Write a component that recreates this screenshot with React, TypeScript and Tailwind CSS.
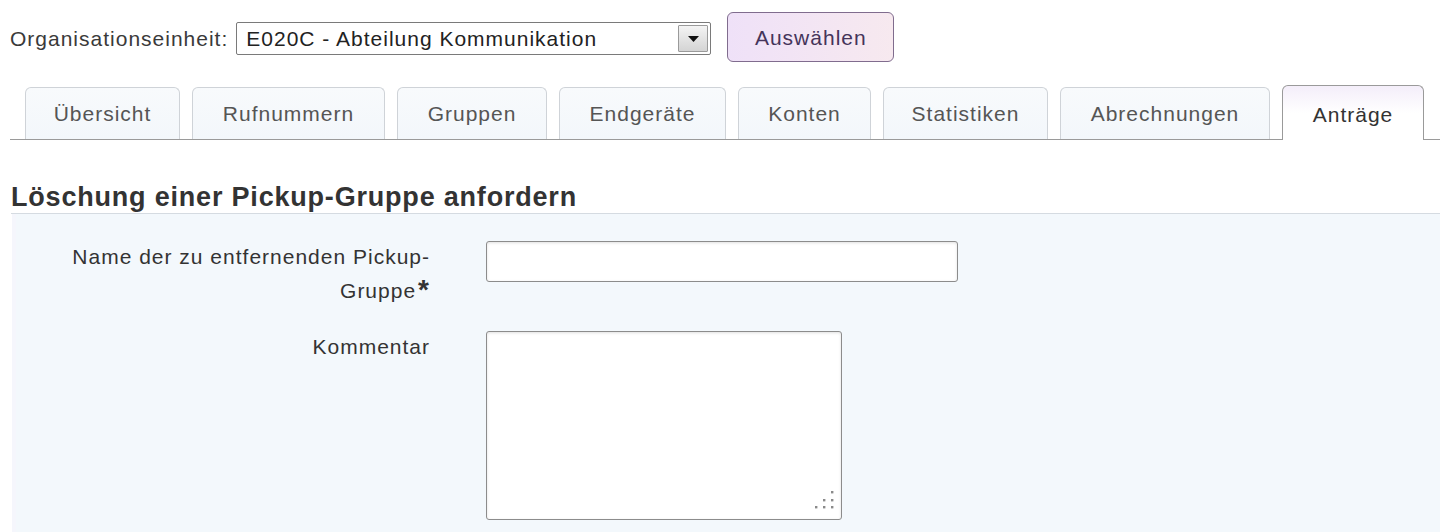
import React from "react";

const tabs: { label: string; w: string; active?: boolean }[] = [
  { label: "Übersicht", w: "w-[155px]" },
  { label: "Rufnummern", w: "w-[193px]" },
  { label: "Gruppen", w: "w-[150px]" },
  { label: "Endgeräte", w: "w-[167px]" },
  { label: "Konten", w: "w-[133px]" },
  { label: "Statistiken", w: "w-[165px]" },
  { label: "Abrechnungen", w: "w-[210px]" },
  { label: "Anträge", w: "w-[142px]", active: true },
];

export default function App() {
  return (
    <div className="w-[1440px] h-[532px] overflow-hidden bg-white font-['Liberation_Sans',Arial,sans-serif] text-[21px] tracking-[1px] text-[#333]">
      {/* Top row */}
      <div className="flex items-center pt-[12px] pl-[10px] h-[62px]">
        <span className="text-[#3a3a3a] leading-none mt-[3px]">Organisationseinheit:</span>
        <div className="ml-[8px] mt-[3px] flex items-center w-[475px] h-[33px] border border-[#7a7a7a] rounded-[2px] bg-white pl-[9px] pr-[2px]">
          <span className="flex-1 leading-none text-[#222]">E020C - Abteilung Kommunikation</span>
          <div className="w-[30px] h-[27px] border border-[#9a9a9a] rounded-[1px] bg-gradient-to-b from-[#f4f4f4] to-[#d4d4d4] flex items-center justify-center">
            <svg width="11" height="6" viewBox="0 0 11 6">
              <path d="M0 0 H11 L5.5 6 Z" fill="#111" />
            </svg>
          </div>
        </div>
        <button className="ml-[16px] w-[167px] h-[50px] rounded-[6px] border border-[#806c8e] bg-gradient-to-r from-[#efe1f8] to-[#f7e9ef] text-[#45345a] leading-none">
          Auswählen
        </button>
      </div>

      {/* Tabs */}
      <div className="mt-[26px] ml-[10px] pl-[15px] flex items-end gap-[12px] h-[52px] border-b border-[#9a9a9a]">
        {tabs.map((t) =>
          t.active ? (
            <div
              key={t.label}
              className={`${t.w} h-[55px] -mb-px flex items-center justify-center rounded-t-[6px] border border-b-0 border-[#9a9a9a] bg-gradient-to-b from-[#f4eefa] to-white to-50% text-[#333] pt-[3px]`}
            >
              {t.label}
            </div>
          ) : (
            <div
              key={t.label}
              className={`${t.w} h-[52px] flex items-center justify-center rounded-t-[6px] border border-b-0 border-[#cfd3d8] bg-gradient-to-b from-[#f8fafc] to-[#f3f7fb] text-[#555]`}
            >
              {t.label}
            </div>
          )
        )}
      </div>

      {/* Section */}
      <div className="ml-[12px]">
        <h2 className="pt-[40px] h-[74px] leading-[34px] font-bold text-[27px] tracking-[0.8px] text-[#333] border-b border-[#d5dbe1] -ml-[1px]">
          Löschung einer Pickup-Gruppe anfordern
        </h2>
        <div className="h-[400px] bg-[#f3f8fc] border-l-4 border-[#f5f6fc] pt-[26px] flex flex-col gap-[22px]">
          <div className="flex items-start">
            <div className="w-[414px] text-right leading-[34px] text-[#333]">
              Name der zu entfernenden Pickup-
              <br />
              Gruppe
              <span className="inline-block ml-[2px] text-[28px] font-bold leading-none align-top mt-[2px] text-[#333]">*</span>
            </div>
            <input
              type="text"
              className="ml-[56px] mt-[1px] w-[472px] h-[41px] bg-white border border-[#8c8c8c] rounded-[3px] shadow-[inset_0_1px_3px_rgba(0,0,0,0.12)] outline-none"
            />
          </div>
          <div className="flex items-start">
            <div className="w-[414px] text-right leading-[34px] text-[#333]">Kommentar</div>
            <div className="relative ml-[56px] mt-[1px]">
              <textarea className="block w-[356px] h-[189px] bg-white border border-[#8c8c8c] rounded-[3px] shadow-[inset_0_1px_3px_rgba(0,0,0,0.12)] resize-none outline-none" />
              <svg className="absolute right-[7px] bottom-[11px]" width="20" height="20" viewBox="0 0 20 20">
                <rect x="16" y="2" width="2.4" height="2.4" fill="#8a8a8a" />
                <rect x="8" y="10" width="2.4" height="2.4" fill="#8a8a8a" />
                <rect x="16" y="10" width="2.4" height="2.4" fill="#8a8a8a" />
                <rect x="0" y="17" width="2.4" height="2.4" fill="#8a8a8a" />
                <rect x="8" y="17" width="2.4" height="2.4" fill="#8a8a8a" />
                <rect x="16" y="17" width="2.4" height="2.4" fill="#8a8a8a" />
              </svg>
            </div>
          </div>
        </div>
      </div>
    </div>
  );
}
